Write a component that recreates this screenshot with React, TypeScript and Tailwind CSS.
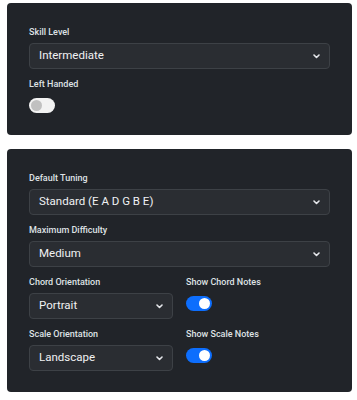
import React, { useState } from 'react';

const font = { fontFamily: 'Roboto, "Noto Sans", sans-serif' };

function Chevron() {
  return (
    <svg width="7" height="5" viewBox="0 0 7 5" className="shrink-0">
      <path d="M1 1 L3.5 3.5 L6 1" fill="none" stroke="#e5e7eb" strokeWidth="1.6" strokeLinecap="round" strokeLinejoin="round" />
    </svg>
  );
}

function Select({ value }: { value: string }) {
  return (
    <div className="flex h-[26px] items-center justify-between rounded-[4px] border border-[#3d4146] bg-[#2a2d32] pl-[9px] pr-[9px]">
      <span className="text-[11.5px] leading-none text-[#f0f1f3]">{value}</span>
      <Chevron />
    </div>
  );
}

function Toggle({ on }: { on: boolean }) {
  const [checked, setChecked] = useState(on);
  return (
    <button
      onClick={() => setChecked(!checked)}
      className={`relative mt-[3px] h-[15px] w-[26px] rounded-full ${checked ? 'bg-[#0d6efd]' : 'bg-[#f2f2f2]'}`}
    >
      <span
        className={`absolute top-[2px] h-[11px] w-[11px] rounded-full ${checked ? 'right-[2px] bg-white' : 'left-[2px] bg-[#c0c0c0]'}`}
      />
    </button>
  );
}

function Label({ children }: { children: React.ReactNode }) {
  return <div className="mb-1 h-[14px] text-[9px] font-medium leading-[14px] text-[#dfe2e5]">{children}</div>;
}

function Field({ label, children }: { label: string; children: React.ReactNode }) {
  return (
    <div className="flex flex-col">
      <Label>{label}</Label>
      {children}
    </div>
  );
}

export default function App() {
  return (
    <div className="min-h-[400px] bg-white pt-[3px]" style={font}>
      <div className="ml-[7px] w-[345px] rounded-[4px] bg-[#212429] p-[22px]">
        <div className="flex flex-col gap-2">
          <Field label="Skill Level">
            <Select value="Intermediate" />
          </Field>
          <div className="flex flex-col items-start">
            <Label>Left Handed</Label>
            <Toggle on={false} />
          </div>
        </div>
      </div>

      <div className="ml-[7px] mt-[14px] w-[345px] rounded-[4px] bg-[#212429] px-[22px] pt-[22px] pb-[21px]">
        <div className="flex flex-col gap-2">
          <Field label="Default Tuning">
            <Select value="Standard (E A D G B E)" />
          </Field>
          <Field label="Maximum Difficulty">
            <Select value="Medium" />
          </Field>
          <div className="grid grid-cols-2 gap-x-[13px] gap-y-2">
            <Field label="Chord Orientation">
              <Select value="Portrait" />
            </Field>
            <div className="flex flex-col items-start">
              <Label>Show Chord Notes</Label>
              <Toggle on={true} />
            </div>
            <Field label="Scale Orientation">
              <Select value="Landscape" />
            </Field>
            <div className="flex flex-col items-start">
              <Label>Show Scale Notes</Label>
              <Toggle on={true} />
            </div>
          </div>
        </div>
      </div>
    </div>
  );
}
